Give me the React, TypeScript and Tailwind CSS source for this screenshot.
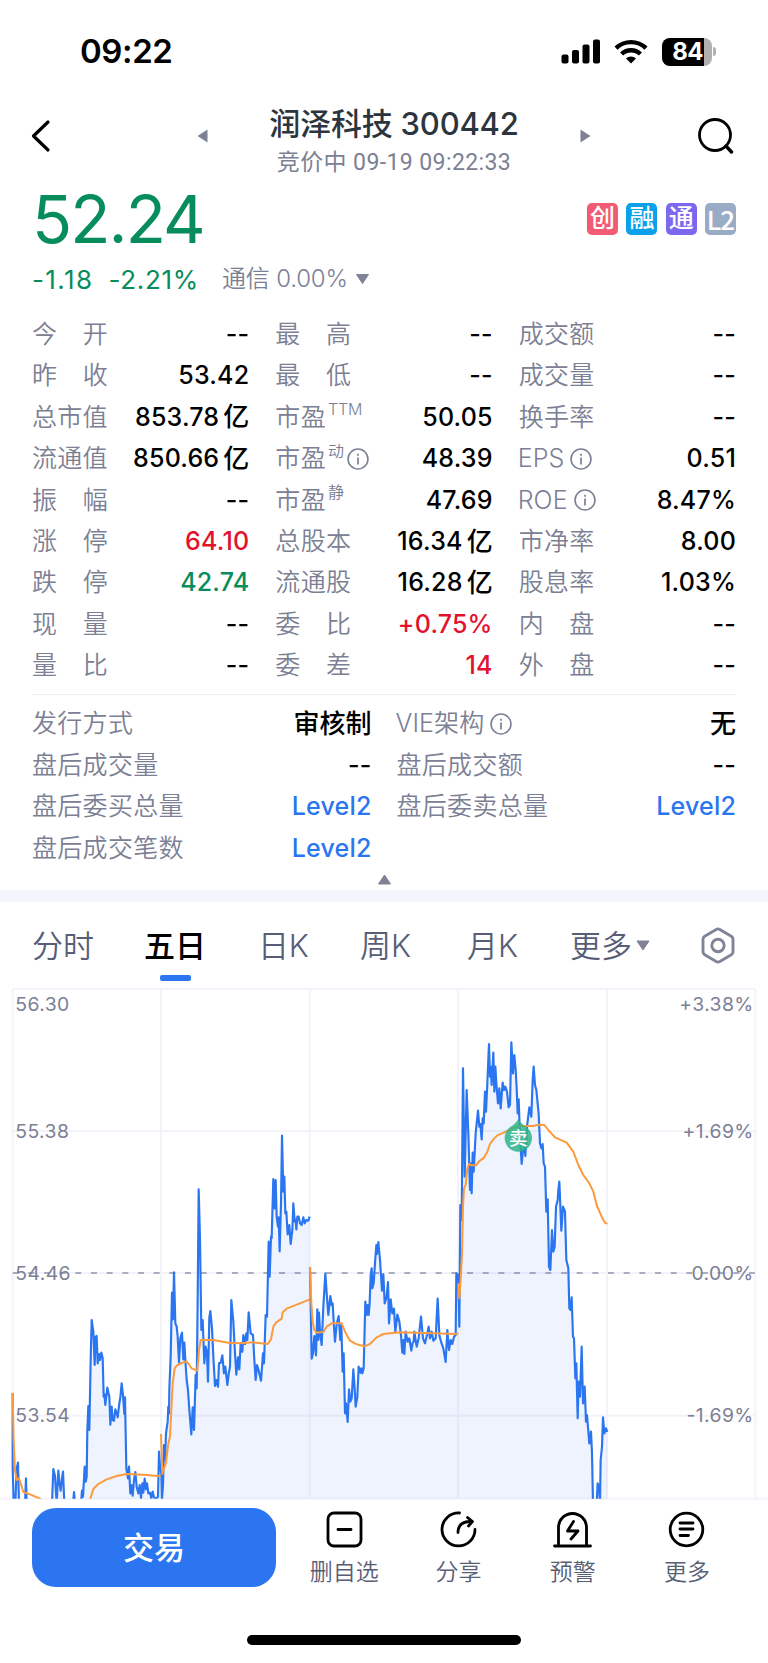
import React from "react";

type Cell = {
  label: string;
  sup?: string;
  info?: boolean;
  value: string;
  unit?: string;
  color?: string;
};

const quoteCells: Cell[] = [
  { label: "今 开", value: "--" },
  { label: "最 高", value: "--" },
  { label: "成交额", value: "--" },
  { label: "昨 收", value: "53.42" },
  { label: "最 低", value: "--" },
  { label: "成交量", value: "--" },
  { label: "总市值", value: "853.78", unit: "亿" },
  { label: "市盈", sup: "TTM", value: "50.05" },
  { label: "换手率", value: "--" },
  { label: "流通值", value: "850.66", unit: "亿" },
  { label: "市盈", sup: "动", info: true, value: "48.39" },
  { label: "EPS", info: true, value: "0.51" },
  { label: "振 幅", value: "--" },
  { label: "市盈", sup: "静", value: "47.69" },
  { label: "ROE", info: true, value: "8.47%" },
  { label: "涨 停", value: "64.10", color: "text-[#e2122f]" },
  { label: "总股本", value: "16.34", unit: "亿" },
  { label: "市净率", value: "8.00" },
  { label: "跌 停", value: "42.74", color: "text-[#078c5b]" },
  { label: "流通股", value: "16.28", unit: "亿" },
  { label: "股息率", value: "1.03%" },
  { label: "现 量", value: "--" },
  { label: "委 比", value: "+0.75%", color: "text-[#e2122f]" },
  { label: "内 盘", value: "--" },
  { label: "量 比", value: "--" },
  { label: "委 差", value: "14", color: "text-[#e2122f]" },
  { label: "外 盘", value: "--" },
];

const extraCells: Cell[] = [
  { label: "发行方式", value: "", unit: "审核制" },
  { label: "VIE架构", info: true, value: "", unit: "无" },
  { label: "盘后成交量", value: "--" },
  { label: "盘后成交额", value: "--" },
  { label: "盘后委买总量", value: "Level2", color: "text-[#2b76f0]" },
  { label: "盘后委卖总量", value: "Level2", color: "text-[#2b76f0]" },
  { label: "盘后成交笔数", value: "Level2", color: "text-[#2b76f0]" },
];

const tags = [
  { text: "创", className: "bg-[#f25b74] text-[25px]" },
  { text: "融", className: "bg-[#0aa1ea] text-[25px]" },
  { text: "通", className: "bg-[#7b68ee] text-[25px]" },
  { text: "L2", className: "bg-[#9aabc5] text-[26px] font-['Noto_Sans_CJK_SC',sans-serif] tracking-[-1px] pb-px" },
];

// Chart units are a third of a pixel. Each block covers two trading days
// and is shifted into place by its own offset.
const blocks = [
  {
    transform: "translate(0 402)",
    base: 1140,
    start: 38,
    end: 929,
    price:
      "38,820 38,1040 41,1150 46,1150 50,1045 54,1028 57,1150 75,1150 78,1075 80,1150 156,1150 160,1047 165,1068 170,1150 175,1052 178,1085 182,1112 186,1075 189,1055 193,1150 219,1150 222,1116 225,1150 243,1150 246,1112 249,1130 254,1040 257,1085 260,1070 262,930 265,858 268,930 272,720 275,600 280,635 284,735 287,650 290,648 293,730 297,702 300,720 304,698 308,714 311,830 313,822 316,855 322,803 328,830 331,914 335,860 338,900 342,902 346,868 350,880 353,892 358,850 361,832 365,790 369,825 373,882 375,832 379,1045 384,1075 387,1040 391,1120 394,1095 398,1127 402,1080 406,1056 410,1100 415,1120 419,1095 423,1134 427,1090 430,1118 434,1076 438,1108 441,1090 445,1120 450,1118 454,1135 458,1115 462,1132 468,1136 474,1130 477,995 480,1040 484,1060 486,1136 489,1095 492,975 495,1020 498,940 503,905 505,860 507,880 508,808 512,710 516,518 519,598 522,457 526,610 530,620 533,650 537,727 541,655 546,638 550,718 553,668 556,720 560,780 564,810 568,870 574,943 578,862 582,930 587,765 590,805 593,540 596,208 600,360 604,630 608,600 613,730 617,680 621,700 624,785 628,592 631,573 636,625 640,710 645,798 649,780 654,800 657,730 662,728 667,706 672,760 676,740 682,795 687,755 690,740 694,540 700,605 705,700 709,764 714,712 718,748 722,670 727,695 730,645 735,672 739,640 742,660 746,577 752,640 759,645 763,720 767,780 771,735 776,752 783,782 789,700 792,730 797,585 801,590 806,365 809,470 813,350 815,355 820,177 824,265 827,180 830,290 834,320 836,292 839,394 843,250 846,47 850,215 853,170 856,280 859,275 863,343 868,315 872,372 877,330 880,250 884,305 887,300 889,328 892,290 896,290 900,310 905,315 910,292 914,310 919,300 925,302 929,290",
    averages: [
      "38,818 41,960 45,1050 50,1080 57,1075 62,1090 70,1116 90,1123 120,1136 150,1160 262,1160 272,1133 280,1107 295,1092 320,1078 350,1068 380,1062 430,1064 482,1069",
      "483,942 487,1062 492,1045 498,1028 505,970 510,950 514,870 518,790 524,745 530,737 545,729 560,724 568,735 575,745 592,752 597,690 602,660 640,660 685,668 720,670 760,667 803,672 813,658 820,620 828,608 845,596 848,577 860,566 900,550 929,538",
    ],
  },
  {
    transform: "translate(900 102)",
    base: 1440,
    start: 30,
    end: 922,
    price:
      "30,742 33,900 35,1016 39,1000 43,948 48,1006 52,868 55,960 57,878 60,935 65,975 70,860 76,760 80,820 85,885 91,828 95,855 98,850 102,920 105,965 110,912 116,888 121,960 124,915 128,1055 131,1000 135,1180 138,1150 143,1206 147,1108 151,1145 155,1135 160,1048 163,1090 167,1160 172,1130 176,1040 181,1058 184,1045 187,1060 191,1045 196,845 200,885 203,855 206,885 209,848 212,765 215,745 217,805 221,790 225,730 229,675 231,702 235,666 240,720 246,812 250,762 254,850 260,830 264,786 267,910 272,838 277,880 282,866 286,935 292,884 298,905 303,945 307,998 310,960 313,1002 317,935 323,965 328,955 334,992 338,968 341,965 343,935 350,980 356,955 363,890 369,955 375,970 381,945 386,920 390,955 395,935 400,962 407,955 413,836 418,945 424,968 430,985 437,1026 442,930 447,990 452,960 457,972 462,950 467,945 469,760 475,765 478,920 481,555 485,600 489,145 494,470 500,210 505,340 510,510 512,430 515,520 518,398 521,455 527,340 534,272 538,320 541,312 545,358 548,295 551,310 555,215 558,275 562,190 567,72 570,170 572,140 575,195 580,98 583,215 586,140 589,190 594,250 598,205 602,265 608,188 612,210 616,200 621,215 626,262 630,255 634,67 639,160 643,105 647,150 650,205 653,280 656,238 660,350 665,432 669,390 673,380 676,408 681,320 688,262 694,290 698,180 701,140 705,195 709,210 713,250 716,282 720,370 724,385 728,372 731,430 735,440 739,575 743,538 747,740 751,750 756,630 760,695 764,680 768,560 773,540 775,510 778,485 784,632 789,560 795,575 799,720 805,745 808,865 812,870 815,832 819,950 822,955 826,1075 829,1030 833,1195 836,1085 840,1130 845,980 849,1150 854,1100 858,1205 861,1185 868,1270 873,1235 876,1300 879,1450 890,1450 893,1390 897,1400 900,1450 902,1320 906,1280 909,1192 913,1240 918,1225 922,1236",
    averages: [
      "30,742 34,850 38,905 43,930 50,938 70,936 80,920 95,910 125,910 135,935 150,962 170,973 193,979 210,972 230,952 250,942 300,937 400,940 465,942 475,940",
      "475,790 478,835 482,780 486,700 489,560 492,505 497,495 502,445 507,432 515,436 528,436 537,424 552,413 562,395 570,372 580,358 592,346 612,338 640,323 665,318 700,318 715,314 733,315 745,330 765,352 800,368 820,395 835,435 850,465 868,490 880,515 890,555 905,590 915,608 922,612",
    ],
  },
];

const InfoIcon: React.FC = () => (
  <svg className="ml-[3px] h-[22px] w-[22px] shrink-0" viewBox="0 0 23 23" fill="none" stroke="#7c8094">
    <circle cx="11.5" cy="11.5" r="10.4" strokeWidth="1.7" />
    <path d="M11.5 10v7.2M11.5 6v2.1" strokeWidth="1.8" />
  </svg>
);

const StatCell: React.FC<{ cell: Cell }> = ({ cell }) => (
  <div className="flex items-center justify-between whitespace-nowrap">
    <div className="flex h-full items-center text-[25px] font-[350] tracking-[0.3px] text-[#7c8094]">
      {cell.label.includes(" ") ? (
        <span className="flex w-[76px] justify-between">
          {cell.label.split(" ").map((char) => (
            <span key={char}>{char}</span>
          ))}
        </span>
      ) : (
        <span className={/^[A-Z]/.test(cell.label) ? "-ml-px mr-[3px] tracking-[0.1px]" : ""}>{cell.label}</span>
      )}
      {cell.sup && <span className="mb-4 ml-0.5 text-[16px] tracking-[-0.2px]">{cell.sup}</span>}
      {cell.info && <InfoIcon />}
    </div>
    <div className={`flex items-center text-[25px] font-medium tracking-[0.2px] ${cell.color ?? "text-black"}`}>
      <span>{cell.value}</span>
      {cell.unit && <span className="-mt-px ml-[4px] text-[26px] tracking-normal">{cell.unit}</span>}
    </div>
  </div>
);

const StatusBar: React.FC = () => (
  <div className="flex h-[100px] items-center justify-between pl-[80px] pr-[52px] pt-[3px]">
    <span className="text-[33px] font-semibold tracking-[-0.4px] text-black">09:22</span>
    <div className="flex items-center">
      <svg className="h-[25px] w-[40px]" viewBox="0 0 40 25">
        <rect x="0.5" y="15.5" width="7" height="9" rx="2" />
        <rect x="11" y="11" width="7" height="13.5" rx="2" />
        <rect x="21.5" y="5.5" width="7" height="19" rx="2" />
        <rect x="32" y="0.5" width="7" height="24" rx="2" />
      </svg>
      <svg className="ml-[13px] h-[25px] w-[34px]" viewBox="0 0 34 25" fill="none" stroke="black" strokeWidth="4.4">
        <path d="M2 9.2a21.5 21.5 0 0 1 30 0" />
        <path d="M7.6 15a13.6 13.6 0 0 1 18.8 0" />
        <path d="M17 24.5l-5-5.1a7.2 7.2 0 0 1 10 0z" fill="black" stroke="none" />
      </svg>
      <div className="ml-[14px] flex h-[28px] w-[50px] overflow-hidden rounded-[8px] bg-[#b0b0b0]">
        <div className="flex w-[42px] items-center justify-end bg-black pr-px">
          <span className="text-[24px] font-bold leading-none tracking-[-0.5px] text-white">84</span>
        </div>
      </div>
      <div className="ml-px h-[9px] w-[3px] rounded-r-full bg-[#b0b0b0]" />
    </div>
  </div>
);

const Header: React.FC = () => (
  <div className="flex h-[72px] items-center pl-[30px] pr-[33px]">
    <svg className="h-[34px] w-[21px]" viewBox="0 0 21 34" fill="none" stroke="black" strokeWidth="3.2" strokeLinecap="round" strokeLinejoin="round">
      <path d="M18 3L3.5 17L18 31" />
    </svg>
    <div className="ml-[146px] mr-auto flex w-[394px] items-center justify-between">
      <svg className="h-[14px] w-[11px]" viewBox="0 0 11 14" fill="#7f8295">
        <path d="M0.5 7L10.5 0.5V13.5z" />
      </svg>
      <div className="mt-[7px] flex flex-col items-center">
        <div className="text-[31px] font-medium leading-[45px] tracking-[-0.2px] text-[#2c353e]">润泽科技 300442</div>
        <div className="font-[Roboto,'Noto_Sans_CJK_SC',sans-serif] text-[23px] leading-[33px] tracking-[0.4px] text-[#7c8094]">
          竞价中 09-19 09:22:33
        </div>
      </div>
      <svg className="h-[14px] w-[11px]" viewBox="0 0 11 14" fill="#7f8295">
        <path d="M10.5 7L0.5 0.5V13.5z" />
      </svg>
    </div>
    <svg className="h-[36px] w-[37px]" viewBox="0 0 37 36" fill="none" stroke="black" strokeWidth="2.8" strokeLinecap="round">
      <circle cx="17" cy="17" r="15.5" />
      <path d="M28 28l5.5 6" strokeWidth="3.4" />
    </svg>
  </div>
);

const PriceSummary: React.FC = () => (
  <div className="flex h-[132px] justify-between px-[32px] pt-[8px]">
    <div>
      <div className="h-[78px] text-[66px] leading-[79px] tracking-[-1.9px] text-[#078c5b]">52.24</div>
      <div className="flex h-[42px] items-center whitespace-nowrap text-[26px]">
        <span className="tracking-[1.4px] text-[#078c5b]">-1.18</span>
        <span className="ml-[15px] tracking-[0.7px] text-[#078c5b]">-2.21%</span>
        <span className="ml-[23px] text-[24px] font-[350] tracking-[-0.2px] text-[#7c8094]">通信 0.00%</span>
        <svg className="ml-[7px] h-[10px] w-[15px]" viewBox="0 0 15 10" fill="#7f8295">
          <path d="M1.5 0.5H13.5L7.5 9.5z" stroke="#7f8295" strokeLinejoin="round" />
        </svg>
      </div>
    </div>
    <div className="mt-[23px] flex gap-[8.3px]">
      {tags.map((tag) => (
        <span
          key={tag.text}
          className={`flex h-[32px] w-[31px] items-center justify-center rounded-[5px] font-medium text-white ${tag.className}`}
        >
          {tag.text}
        </span>
      ))}
    </div>
  </div>
);

const ChartTabs: React.FC = () => (
  <div className="flex h-[84px] items-start pl-[32px] text-[31px] font-[350] leading-[87px] text-[#575e76]">
    <span className="w-[112px]">分时</span>
    <span className="relative w-[114px] text-[31px] font-medium text-black">
      五日
      <span className="absolute left-[16px] top-[73px] h-[6px] w-[31px] rounded-[2px] bg-[#2b76f0]" />
    </span>
    <span className="w-[102px] tracking-[-0.3px]">日K</span>
    <span className="w-[107px]">周K</span>
    <span className="w-[103px]">月K</span>
    <span className="flex w-[131px] items-center">
      更多
      <svg className="ml-[4px] h-[11px] w-[14px]" viewBox="0 0 14 11" fill="#7f8295">
        <path d="M1 1H13L7 10z" stroke="#7f8295" strokeLinejoin="round" />
      </svg>
    </span>
    <svg className="mt-[25px] h-[37px] w-[34px]" viewBox="0 0 34 37" fill="none" stroke="#7f8599" strokeWidth="2.9" strokeLinejoin="round">
      <path d="M15.2 2.4Q17 1.4 18.8 2.4L30.3 9.2Q32 10.2 32 12.2V24.8Q32 26.8 30.3 27.8L18.8 34.6Q17 35.6 15.2 34.6L3.7 27.8Q2 26.8 2 24.8V12.2Q2 10.2 3.7 9.2Z" />
      <circle cx="17" cy="18.5" r="6.2" />
    </svg>
  </div>
);

const PriceChart: React.FC = () => (
  <svg className="block h-[514px] w-full" viewBox="0 0 2304 1542">
    <g stroke="#f3f4fa" strokeWidth="6">
      <path d="M38 9H2266M38 435H2266M38 1289H2266M0 1538H2304" />
      <path d="M38 9V1538M483 9V1538M929 9V1538M1374 9V1538M1821 9V1538M2266 9V1538" />
    </g>
    <path d="M38 861H2266" stroke="#f3f4fa" strokeWidth="6" />
    <path d="M38 861H2266" stroke="#a9adc0" strokeWidth="6" strokeDasharray="18 29" />
    <clipPath id="plot">
      <rect x="0" y="0" width="2304" height="1538" />
    </clipPath>
    <g clipPath="url(#plot)" fill="none" strokeLinejoin="round">
      {blocks.map((block) => (
        <g key={block.transform} transform={block.transform}>
          <polygon points={`${block.start},${block.base} ${block.price} ${block.end},${block.base}`} fill="#2b68f0" fillOpacity="0.08" />
          <polyline points={block.price} stroke="#2b76f0" strokeWidth="6.5" />
          {block.averages.map((points) => (
            <polyline key={points} points={points} stroke="#fc9a3c" strokeWidth="6" />
          ))}
        </g>
      ))}
    </g>
    <g transform="translate(1555 457)">
      <path d="M0 -58Q7 -44 24 -34A41 41 0 1 1 -24 -34Q-7 -44 0 -58Z" fill="#2fb48a" fillOpacity="0.85" />
      <text y="20" textAnchor="middle" fontSize="56" fontWeight="500" fill="white">卖</text>
    </g>
    <g fontSize="58" letterSpacing="1.2" fill="#7c8094">
      <text x="46" y="75">56.30</text>
      <text x="46" y="455">55.38</text>
      <text x="46" y="882">54.46</text>
      <text x="46" y="1308">53.54</text>
      <g textAnchor="end">
        <text x="2261" y="75">+3.38%</text>
        <text x="2261" y="455">+1.69%</text>
        <text x="2261" y="882">0.00%</text>
        <text x="2261" y="1308">-1.69%</text>
      </g>
    </g>
  </svg>
);

const actions = [
  {
    label: "删自选",
    icon: (
      <>
        <rect x="2" y="2" width="33" height="33" rx="6" />
        <path d="M12 18.5h13" />
      </>
    ),
  },
  {
    label: "分享",
    icon: (
      <>
        <path d="M19.5 2A16.5 16.5 0 1 0 35 18.5" />
        <path d="M18 21.5C18 14 22 10.5 31 10.5M27.5 6.5l5 4l-4 4.5" />
      </>
    ),
  },
  {
    label: "预警",
    icon: (
      <>
        <path d="M4.5 34.5V16.5a14 14 0 0 1 28 0V34.5M0.5 35h36" />
        <path d="M19.5 10.5l-6 9.5h10.5l-7 8" />
      </>
    ),
  },
  {
    label: "更多",
    icon: (
      <>
        <circle cx="18.5" cy="18.5" r="16.3" />
        <path d="M12 12h13M12 18h13M12 24.5h8.5" />
      </>
    ),
  },
];

const BottomBar: React.FC = () => (
  <div className="flex h-[163px] flex-col items-center">
    <div className="flex w-full pl-[32px] pt-[8px]">
      <button className="h-[79px] w-[244px] rounded-[24px] bg-[#2b76f0] pt-px text-[31px] font-medium text-white">交易</button>
      <div className="ml-[11px] grid w-[457px] grid-cols-4">
        {actions.map((action) => (
          <div key={action.label} className="flex flex-col items-center pt-[3px]">
            <svg className="h-[37px] w-[37px] overflow-visible" viewBox="0 0 37 37" fill="none" stroke="black" strokeWidth="2.8" strokeLinecap="round" strokeLinejoin="round">
              {action.icon}
            </svg>
            <span className="mt-[8px] text-[23px] font-[350] leading-[32px] text-[#575e76]">{action.label}</span>
          </div>
        ))}
      </div>
    </div>
    <div className="mt-[47px] h-[10px] w-[274px] rounded-full bg-black" />
  </div>
);

export default function App() {
  return (
    <div className="h-[1663px] w-[768px] overflow-hidden bg-white font-[Inter,'Noto_Sans_CJK_SC',sans-serif]">
      <StatusBar />
      <Header />
      <PriceSummary />
      <div className="px-[32px] pt-[10px]">
        <div className="grid auto-rows-[41.4px] grid-cols-3 gap-x-[26px]">
          {quoteCells.map((cell, index) => (
            <StatCell key={index} cell={cell} />
          ))}
        </div>
        <div className="mt-[7px] h-px bg-[#eeeff5]" />
        <div className="mt-[9px] grid auto-rows-[41.4px] grid-cols-2 gap-x-[25px]">
          {extraCells.map((cell) => (
            <StatCell key={cell.label} cell={cell} />
          ))}
        </div>
      </div>
      <div className="flex h-[21px] justify-center pt-[5px]">
        <svg className="h-[11px] w-[15px]" viewBox="0 0 15 11" fill="#7f8295">
          <path d="M1.5 10H13.5L7.5 1z" stroke="#7f8295" strokeLinejoin="round" />
        </svg>
      </div>
      <div className="h-[12px] bg-[#f4f5fa]" />
      <ChartTabs />
      <PriceChart />
      <BottomBar />
    </div>
  );
}
